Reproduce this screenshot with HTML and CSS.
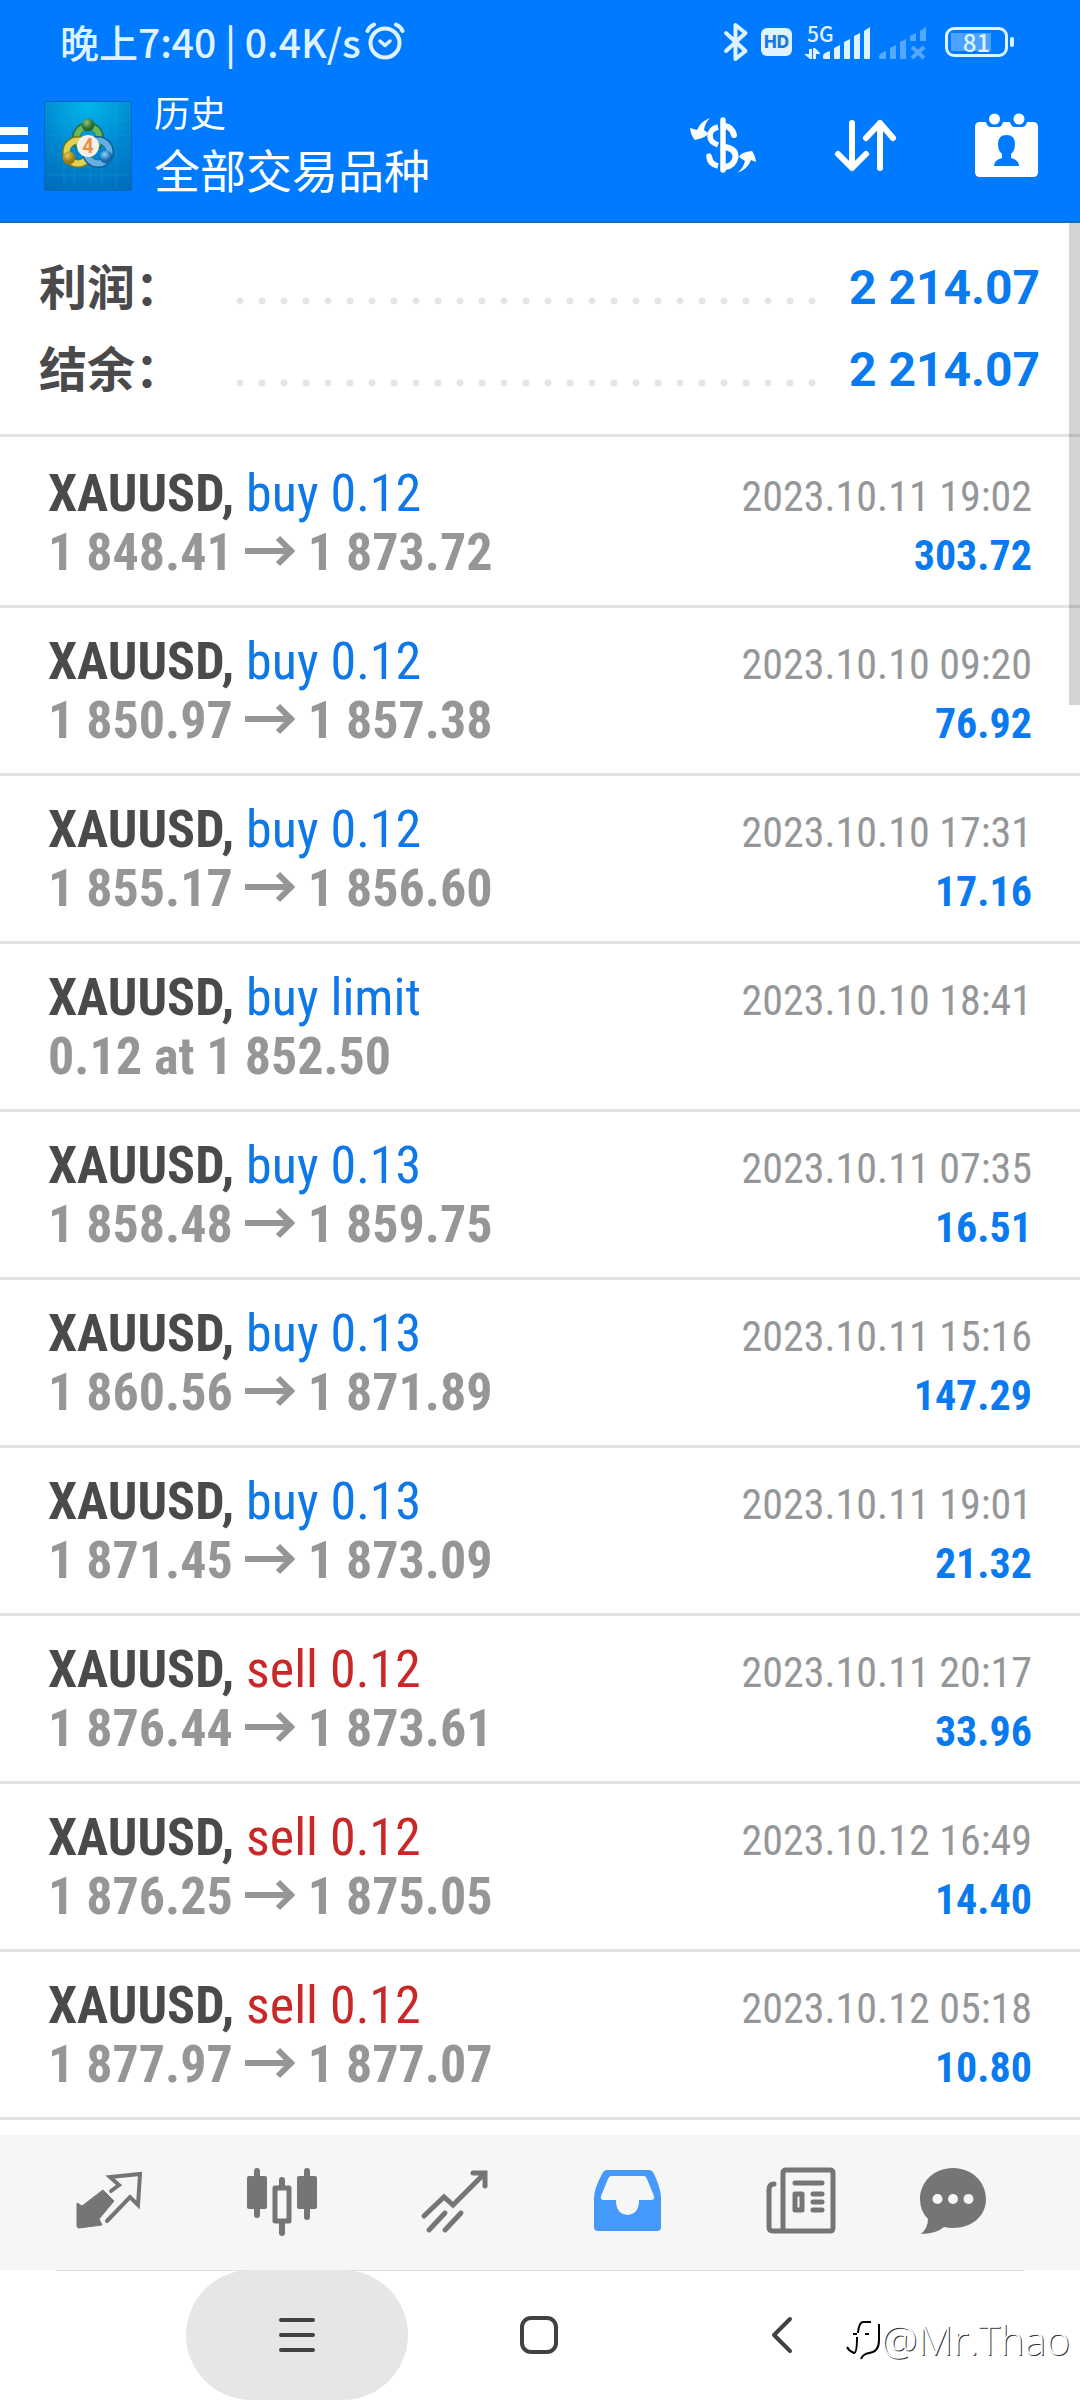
FILE: index.html
```html
<!DOCTYPE html>
<html lang="zh-CN">
<head>
<meta charset="utf-8">
<meta name="viewport" content="width=device-width, initial-scale=1">
<title>历史</title>
<link rel="stylesheet" href="styles.css">
</head>
<body>
<svg class="defs" width="0" height="0" aria-hidden="true">
  <symbol id="arrow" viewBox="0 0 51 40"><path d="M0 21H48M33 8L46 21L33 34" fill="none" stroke="currentColor" stroke-width="6"/></symbol>
</svg>

<header class="header">
  <div class="status">
    <div class="status-left">
      <span>晚上7:40 | 0.4K/s</span>
      <svg width="40" height="38" viewBox="0 0 40 38" fill="none" stroke="currentColor" stroke-linecap="round"><circle cx="20" cy="21" r="14.5" stroke-width="4"/><path d="M2.500 9Q4 5 9 2.500M37.500 9Q36 5 31 2.500" stroke-width="4"/><path d="M15 19L20 23.500L25 19" stroke-width="3.500" stroke-linejoin="round"/></svg>
    </div>
    <div class="status-right">
      <svg class="bt" width="26" height="40" viewBox="0 0 26 40" fill="none" stroke="currentColor" stroke-width="4" stroke-linejoin="round" stroke-linecap="round"><path d="M3 11L22.500 29L12.500 37V3L22.500 11L3 29"/></svg>
      <span class="hd">HD</span>
      <div class="signal">
        <span class="signal-type">5G</span>
        <svg width="124" height="40" viewBox="0 0 124 40">
          <g fill="currentColor"><path d="M5 27H8V37H6L0 32H5ZM9 26H11L16 31V32H12V37H9Z"/><path d="M19 34Q19 31 26 29V37H20Q19 37 19 36ZM30 26L36 23V36Q36 37 35 37H31Q30 37 30 36ZM40 20L46 17V36Q46 37 45 37H41Q40 37 40 36ZM50 14L56 11V36Q56 37 55 37H51Q50 37 50 36ZM60 9L66 5V36Q66 37 65 37H61Q60 37 60 36Z"/></g>
          <g fill="#55a8ff"><path d="M75 34Q76 31 82 29V37H76Q75 37 75 36ZM86 26L92 23V37H86ZM96 20L102 17V37H96ZM106 14L112 11V19H106ZM116 9L122 5V19H116Z"/><path d="M108 25L120 36M120 25L108 36" stroke="#55a8ff" stroke-width="4"/></g>
        </svg>
      </div>
      <span class="battery"><span class="battery-level">81</span></span>
    </div>
  </div>
  <div class="toolbar">
    <button class="menu" aria-label="菜单"><svg width="28" height="42" viewBox="0 0 28 42" fill="#fff"><path d="M0 0H28V8H0ZM0 17H28V25H0ZM0 33H28V41H0Z"/></svg></button>
    <svg class="logo" width="88" height="90" viewBox="0 0 88 90" role="img" aria-label="4">
      <defs>
        <radialGradient id="sky" cx=".5" cy="0" r="1.1"><stop offset="0" stop-color="#00b8ea"/><stop offset=".5" stop-color="#0089d2"/><stop offset="1" stop-color="#006bbc"/></radialGradient>
        <radialGradient id="gr" cx=".4" cy=".3"><stop offset="0" stop-color="#8cc47a"/><stop offset="1" stop-color="#236b2c"/></radialGradient>
        <radialGradient id="ye" cx=".4" cy=".3"><stop offset="0" stop-color="#e8cf55"/><stop offset="1" stop-color="#97790c"/></radialGradient>
        <radialGradient id="bl" cx=".4" cy=".3"><stop offset="0" stop-color="#8fd2fa"/><stop offset="1" stop-color="#1467ac"/></radialGradient>
      </defs>
      <path fill="url(#sky)" stroke="#0a67b5" d="M.5.5H87.500V89.500H.5Z"/>
      <path d="M4 20H84M4 34H84M4 74H84M20 4V86M30 4V86M72 4V86M58 66V86M46 66V86" stroke="#45b5df" stroke-width=".7" opacity=".3"/>
      <circle cx="44" cy="37" r="12" fill="none" stroke="#1f6a35" stroke-width="8"/>
      <circle cx="44" cy="37" r="11.500" fill="none" stroke="#6cb65c" stroke-width="6"/>
      <circle cx="34" cy="51" r="12" fill="none" stroke="#7b7414" stroke-width="8"/>
      <circle cx="34" cy="51" r="11.500" fill="none" stroke="#e0d258" stroke-width="6"/>
      <circle cx="54" cy="51" r="12" fill="none" stroke="#175b91" stroke-width="8"/>
      <circle cx="54" cy="51" r="11.500" fill="none" stroke="#63b0e4" stroke-width="6"/>
      <circle cx="44" cy="24" r="6.500" fill="url(#gr)"/><circle cx="25" cy="57" r="6.500" fill="url(#ye)"/><circle cx="62" cy="56" r="6.500" fill="url(#bl)"/>
      <circle cx="44" cy="45" r="11" fill="#f3f1ef"/>
      <text x="44" y="52" class="logo-digit">4</text>
    </svg>
    <div class="titles"><p>历史</p><h1>全部交易品种</h1></div>
    <div class="actions">
      <button aria-label="货币"><svg width="70" height="64" viewBox="4 0 70 64" fill="none" stroke="#fff" stroke-width="5.500" stroke-linecap="round"><path d="M37 7V57"/><path d="M39 13Q46 14 48 22M39 34Q50 36 49.500 44Q48 53 39 54" stroke-width="6"/><path d="M32 14Q24 16 24 23Q24 29 32 32M23 44Q24 51 32 53" stroke-linecap="butt"/><path d="M23 43L24 46" /><path d="M24 5Q19 10 18 17L22 20Q22 24 9 27Q5 23 4 15L11 17Q15 8 24 5ZM51 60Q57 56 59 48L53 44Q55 39 66 38Q69 42 70 49L65 47Q62 56 51 60Z" fill="#fff" stroke="none"/></svg></button>
      <button aria-label="排序"><svg width="70" height="64" viewBox="0 0 70 64" fill="none" stroke="#fff" stroke-width="6" stroke-linecap="round" stroke-linejoin="round"><path d="M21 10V55M7 41L21 55L35 41M49 55V10M35 25L49 10L62 25"/></svg></button>
      <button aria-label="日期"><svg width="70" height="64" viewBox="0 0 70 64"><path d="M8 9H14Q15 14 19 14H26Q30 14 31 9H38Q39 14 43 14H50Q54 14 55 9H61Q66 9 66 14V59Q66 64 61 64H8Q3 64 3 59V14Q3 9 8 9Z" fill="#fff"/><circle cx="22.500" cy="6" r="5.500" fill="#fff"/><circle cx="47" cy="6" r="5.500" fill="#fff"/><path d="M22 53Q22 47 30 45V41Q26 38 26 31Q26 22 34.500 22Q43 22 43 31Q43 38 39 41V45Q47 47 47 53Z" fill="#007aff"/></svg></button>
    </div>
  </div>
</header>

<main class="history">
  <dl class="summary">
    <div><dt>利润：</dt><dd>2 214.07</dd></div>
    <div><dt>结余：</dt><dd>2 214.07</dd></div>
  </dl>
  <ul class="deals">
    <li><div class="line"><span><b>XAUUSD,</b> <span class="buy">buy 0.12</span></span><time>2023.10.11 19:02</time></div><div class="line"><span class="price">1 848.41 <svg><use href="#arrow"/></svg> 1 873.72</span><span class="profit">303.72</span></div></li>
    <li><div class="line"><span><b>XAUUSD,</b> <span class="buy">buy 0.12</span></span><time>2023.10.10 09:20</time></div><div class="line"><span class="price">1 850.97 <svg><use href="#arrow"/></svg> 1 857.38</span><span class="profit">76.92</span></div></li>
    <li><div class="line"><span><b>XAUUSD,</b> <span class="buy">buy 0.12</span></span><time>2023.10.10 17:31</time></div><div class="line"><span class="price">1 855.17 <svg><use href="#arrow"/></svg> 1 856.60</span><span class="profit">17.16</span></div></li>
    <li><div class="line"><span><b>XAUUSD,</b> <span class="buy">buy limit</span></span><time>2023.10.10 18:41</time></div><div class="line"><span class="price">0.12 at 1 852.50</span></div></li>
    <li><div class="line"><span><b>XAUUSD,</b> <span class="buy">buy 0.13</span></span><time>2023.10.11 07:35</time></div><div class="line"><span class="price">1 858.48 <svg><use href="#arrow"/></svg> 1 859.75</span><span class="profit">16.51</span></div></li>
    <li><div class="line"><span><b>XAUUSD,</b> <span class="buy">buy 0.13</span></span><time>2023.10.11 15:16</time></div><div class="line"><span class="price">1 860.56 <svg><use href="#arrow"/></svg> 1 871.89</span><span class="profit">147.29</span></div></li>
    <li><div class="line"><span><b>XAUUSD,</b> <span class="buy">buy 0.13</span></span><time>2023.10.11 19:01</time></div><div class="line"><span class="price">1 871.45 <svg><use href="#arrow"/></svg> 1 873.09</span><span class="profit">21.32</span></div></li>
    <li><div class="line"><span><b>XAUUSD,</b> <span class="sell">sell 0.12</span></span><time>2023.10.11 20:17</time></div><div class="line"><span class="price">1 876.44 <svg><use href="#arrow"/></svg> 1 873.61</span><span class="profit">33.96</span></div></li>
    <li><div class="line"><span><b>XAUUSD,</b> <span class="sell">sell 0.12</span></span><time>2023.10.12 16:49</time></div><div class="line"><span class="price">1 876.25 <svg><use href="#arrow"/></svg> 1 875.05</span><span class="profit">14.40</span></div></li>
    <li><div class="line"><span><b>XAUUSD,</b> <span class="sell">sell 0.12</span></span><time>2023.10.12 05:18</time></div><div class="line"><span class="price">1 877.97 <svg><use href="#arrow"/></svg> 1 877.07</span><span class="profit">10.80</span></div></li>
  </ul>
  <div class="scrollbar"></div>
</main>

<nav class="tabs">
  <button aria-label="行情"><svg viewBox="0 0 70 70"><path d="M29 24L40 35L25 53L28 59L5 62Q3 62 3 60V37L8 40Z" fill="currentColor" stroke="currentColor" stroke-linejoin="round"/><path d="M37 25L45 19L36 11L66 8L64 39L56 31L33 55" fill="none" stroke="currentColor" stroke-width="4" stroke-linejoin="miter" stroke-linecap="round"/></svg></button>
  <button aria-label="图表"><svg viewBox="0 0 70 70" fill="none" stroke="currentColor" stroke-width="6" stroke-linecap="round"><path d="M10 5V49M60 5V51M35 14V20M35 56V67"/><path d="M2 12H18V41H2ZM52 12H68V41H52Z" fill="currentColor" stroke-width="4" stroke-linejoin="round"/><path d="M28 22H42V55H28Z" stroke-width="5" stroke-linejoin="round"/></svg></button>
  <button aria-label="交易"><svg viewBox="0 0 70 70" fill="none" stroke="currentColor" stroke-width="5" stroke-linecap="round"><path d="M4 50L24 31L33 39L64 8M53 7H65V20M9 64L25 47M25 64L41 47"/></svg></button>
  <button class="active" aria-label="历史"><svg viewBox="0 0 70 70"><path fill-rule="evenodd" fill="currentColor" d="M14 4H56Q60 4 62 10Q68 24 68 32V61Q68 65 64 65H5Q1 65 1 61V32Q1 23 9 8Q11 4 14 4ZM18 10Q16 10 15 13L8 30Q7 34 11 34H23V37Q24 48 34.500 49Q45 48 46 37V34H58Q62 34 61 30L54 13Q53 10 51 10Z"/></svg></button>
  <button aria-label="新闻"><svg viewBox="0 0 70 70" fill="none" stroke="currentColor" stroke-width="5" stroke-linecap="round" stroke-linejoin="round"><path d="M17 65V7Q17 4 20 4H64Q67 4 67 7V62Q67 65 64 65H7Q3 65 3 61V24Q3 18 8 18" /><path d="M29 17H56M47 28H56M47 36H56M47 44H56"/><path d="M29 28H36V44H29Z"/></svg></button>
  <button aria-label="消息"><svg viewBox="0 0 70 70"><path fill="currentColor" d="M35 2C54 2 68 16 68 33S54 62 35 62Q30 62 26 61Q18 68 3 68Q10 62 10 53Q2 45 2 33C2 16 16 2 35 2Z"/><g fill="#f6f6f6"><circle cx="19.500" cy="33" r="5"/><circle cx="35" cy="33" r="5"/><circle cx="50.500" cy="33" r="5"/></g></svg></button>
</nav>
<nav class="system">
  <button class="pressed" aria-label="最近"><svg viewBox="0 0 40 40"><path d="M4 5H36M4 20H36M4 35H36"/></svg></button>
  <button aria-label="主页"><svg viewBox="0 0 40 40"><rect x="3" y="3" width="34" height="34" rx="9"/></svg></button>
  <button aria-label="返回"><svg viewBox="0 0 40 40"><path d="M28 4L12 20L28 36"/></svg></button>
  <div class="watermark"><svg width="36" height="44" viewBox="0 0 36 44" fill="none" stroke="#000" stroke-width="2"><path d="M26 5H18Q14 5 13 16M8 17H12M12 20Q12 36 9 36Q4 34 2 30M34 7V23Q34 35 24 36Q18 37 16 42M20 17H24"/></svg><span>@Mr.Thao</span></div>
</nav>
</body>
</html>
```
FILE: styles.css
```css
* { box-sizing: border-box; }
body {
  margin: 0;
  min-height: 100vh;
  display: flex;
  flex-direction: column;
  background: #fff;
  color: #4a4a4c;
  font-family: "Roboto Condensed", "Liberation Sans Narrow", Roboto, "Noto Sans CJK SC", sans-serif;
}
p, h1, dl, dd, ul { margin: 0; padding: 0; }
button { border: 0; padding: 0; background: none; color: inherit; display: flex; align-items: center; justify-content: center; }
svg { display: block; flex: none; }
.defs { position: absolute; }

/* header */
.header {
  background: #007aff;
  color: #fff;
  border-bottom: 2px solid #0e6fc8;
  font-family: Roboto, "Noto Sans CJK SC", sans-serif;
}
.status {
  height: 84px;
  padding: 0 66px 0 60px;
  display: flex;
  align-items: center;
  justify-content: space-between;
  color: #def3ff;
}
.status-left, .status-right { display: flex; align-items: center; }
.status-left { gap: 4px; font: 500 39px/56px "Noto Sans CJK SC", sans-serif; padding-bottom: 2px; }
.bt { margin-right: 12px; }
.hd {
  width: 31px;
  height: 28px;
  margin-right: 12px;
  border-radius: 6px;
  background: #def3ff;
  color: #1a78dd;
  font: 800 17px/28px Inter, sans-serif;
  text-align: center;
}
.signal { position: relative; margin-right: 17px; }
.signal-type { position: absolute; left: 3px; top: -4px; font: 500 21px/30px "Noto Sans CJK SC", sans-serif; }
.battery {
  position: relative;
  width: 63px;
  height: 30px;
  padding: 3px;
  border: 3px solid currentColor;
  border-radius: 9px;
  margin-right: 6px;
}
.battery::after {
  content: "";
  position: absolute;
  right: -9px;
  top: 7px;
  width: 4px;
  height: 10px;
  border-radius: 2px;
  background: currentColor;
}
.battery-level {
  display: block;
  background: linear-gradient(90deg, #4ca2ff 78%, transparent 78%);
  font: 500 24px/18px "Noto Sans CJK SC", sans-serif;
  text-align: center;
}
.toolbar { height: 137px; display: flex; align-items: flex-start; }
.menu { margin: 43px 16px 0 0; }
.logo { margin-top: 17px; }
.logo-digit { font: 700 20px Roboto, sans-serif; fill: #ef8f3c; text-anchor: middle; }
.titles { flex: 1; margin: 4px 0 0 22px; }
.titles p { font-size: 36px; line-height: 54px; }
.titles h1 { font-size: 46px; line-height: 60px; font-weight: 400; }
.actions { display: flex; gap: 71px; margin: 29px 38px 0 0; }

/* totals */
.history { flex: 1; position: relative; padding-bottom: 15px; }
.summary {
  padding: 22px 40px 25px 39px;
  border-bottom: 3px solid #e3e3e3;
  margin-bottom: 3px;
}
.summary div { display: flex; align-items: center; height: 82px; }
.summary dt { width: 144px; padding-bottom: 4px; font: 700 48px/78px "Noto Sans CJK SC", sans-serif; }
.summary div::before {
  content: "";
  order: 1;
  flex: 1;
  height: 8px;
  margin: 30px 24px 0 46px;
  background: radial-gradient(circle, #e4e4e4 3px, transparent 4px) 0 0 / 22px 8px repeat-x;
}
.summary dd { order: 2; padding-top: 4px; font: 700 48px/78px Roboto, sans-serif; color: #0a7aef; }

/* deals */
.deals { list-style: none; }
.deals li { padding: 24px 48px 23px; border-bottom: 3px solid #e3e3e3; }
.line { display: flex; justify-content: space-between; align-items: baseline; height: 59px; font-size: 52px; line-height: 59px; }
.buy { color: #0f78e8; }
.sell { color: #c92828; }
.price { color: #949698; font-weight: 700; }
.price svg { display: inline-block; width: 51px; height: 40px; }
.line time { font-size: 42px; color: #949698; }
.profit { font-size: 42px; font-weight: 700; color: #0a7aef; }
.scrollbar { position: absolute; top: 0; right: 0; width: 11px; height: 482px; background: rgba(0, 0, 0, .17); }

/* bottom bars */
.tabs {
  height: 135px;
  padding: 0 61px 3px 22px;
  display: grid;
  grid-template-columns: repeat(5, 173fr) 132fr;
  background: #f6f6f6;
  color: #757575;
}
.tabs svg { width: 70px; height: 70px; }
.tabs .active { color: #4599fb; }
.system {
  position: relative;
  height: 130px;
  padding: 0 177px 0 176px;
  display: grid;
  grid-template-columns: repeat(3, 1fr);
  background: linear-gradient(#e0e0e0, #e0e0e0) center top / calc(100% - 112px) 1px no-repeat;
}
.system > button { margin: 0 10px; border-radius: 65px; }
.system > button svg { width: 40px; height: 40px; fill: none; stroke: #414141; stroke-width: 4px; stroke-linecap: round; stroke-linejoin: round; }
.system .pressed { background: #e6e6e6; }
.watermark {
  position: absolute;
  right: 10px;
  bottom: 33px;
  display: flex;
  align-items: center;
  color: #fff;
  font: 300 41px/56px "Open Sans", sans-serif;
  text-shadow: 1px 1px 0 #333;
}
```
